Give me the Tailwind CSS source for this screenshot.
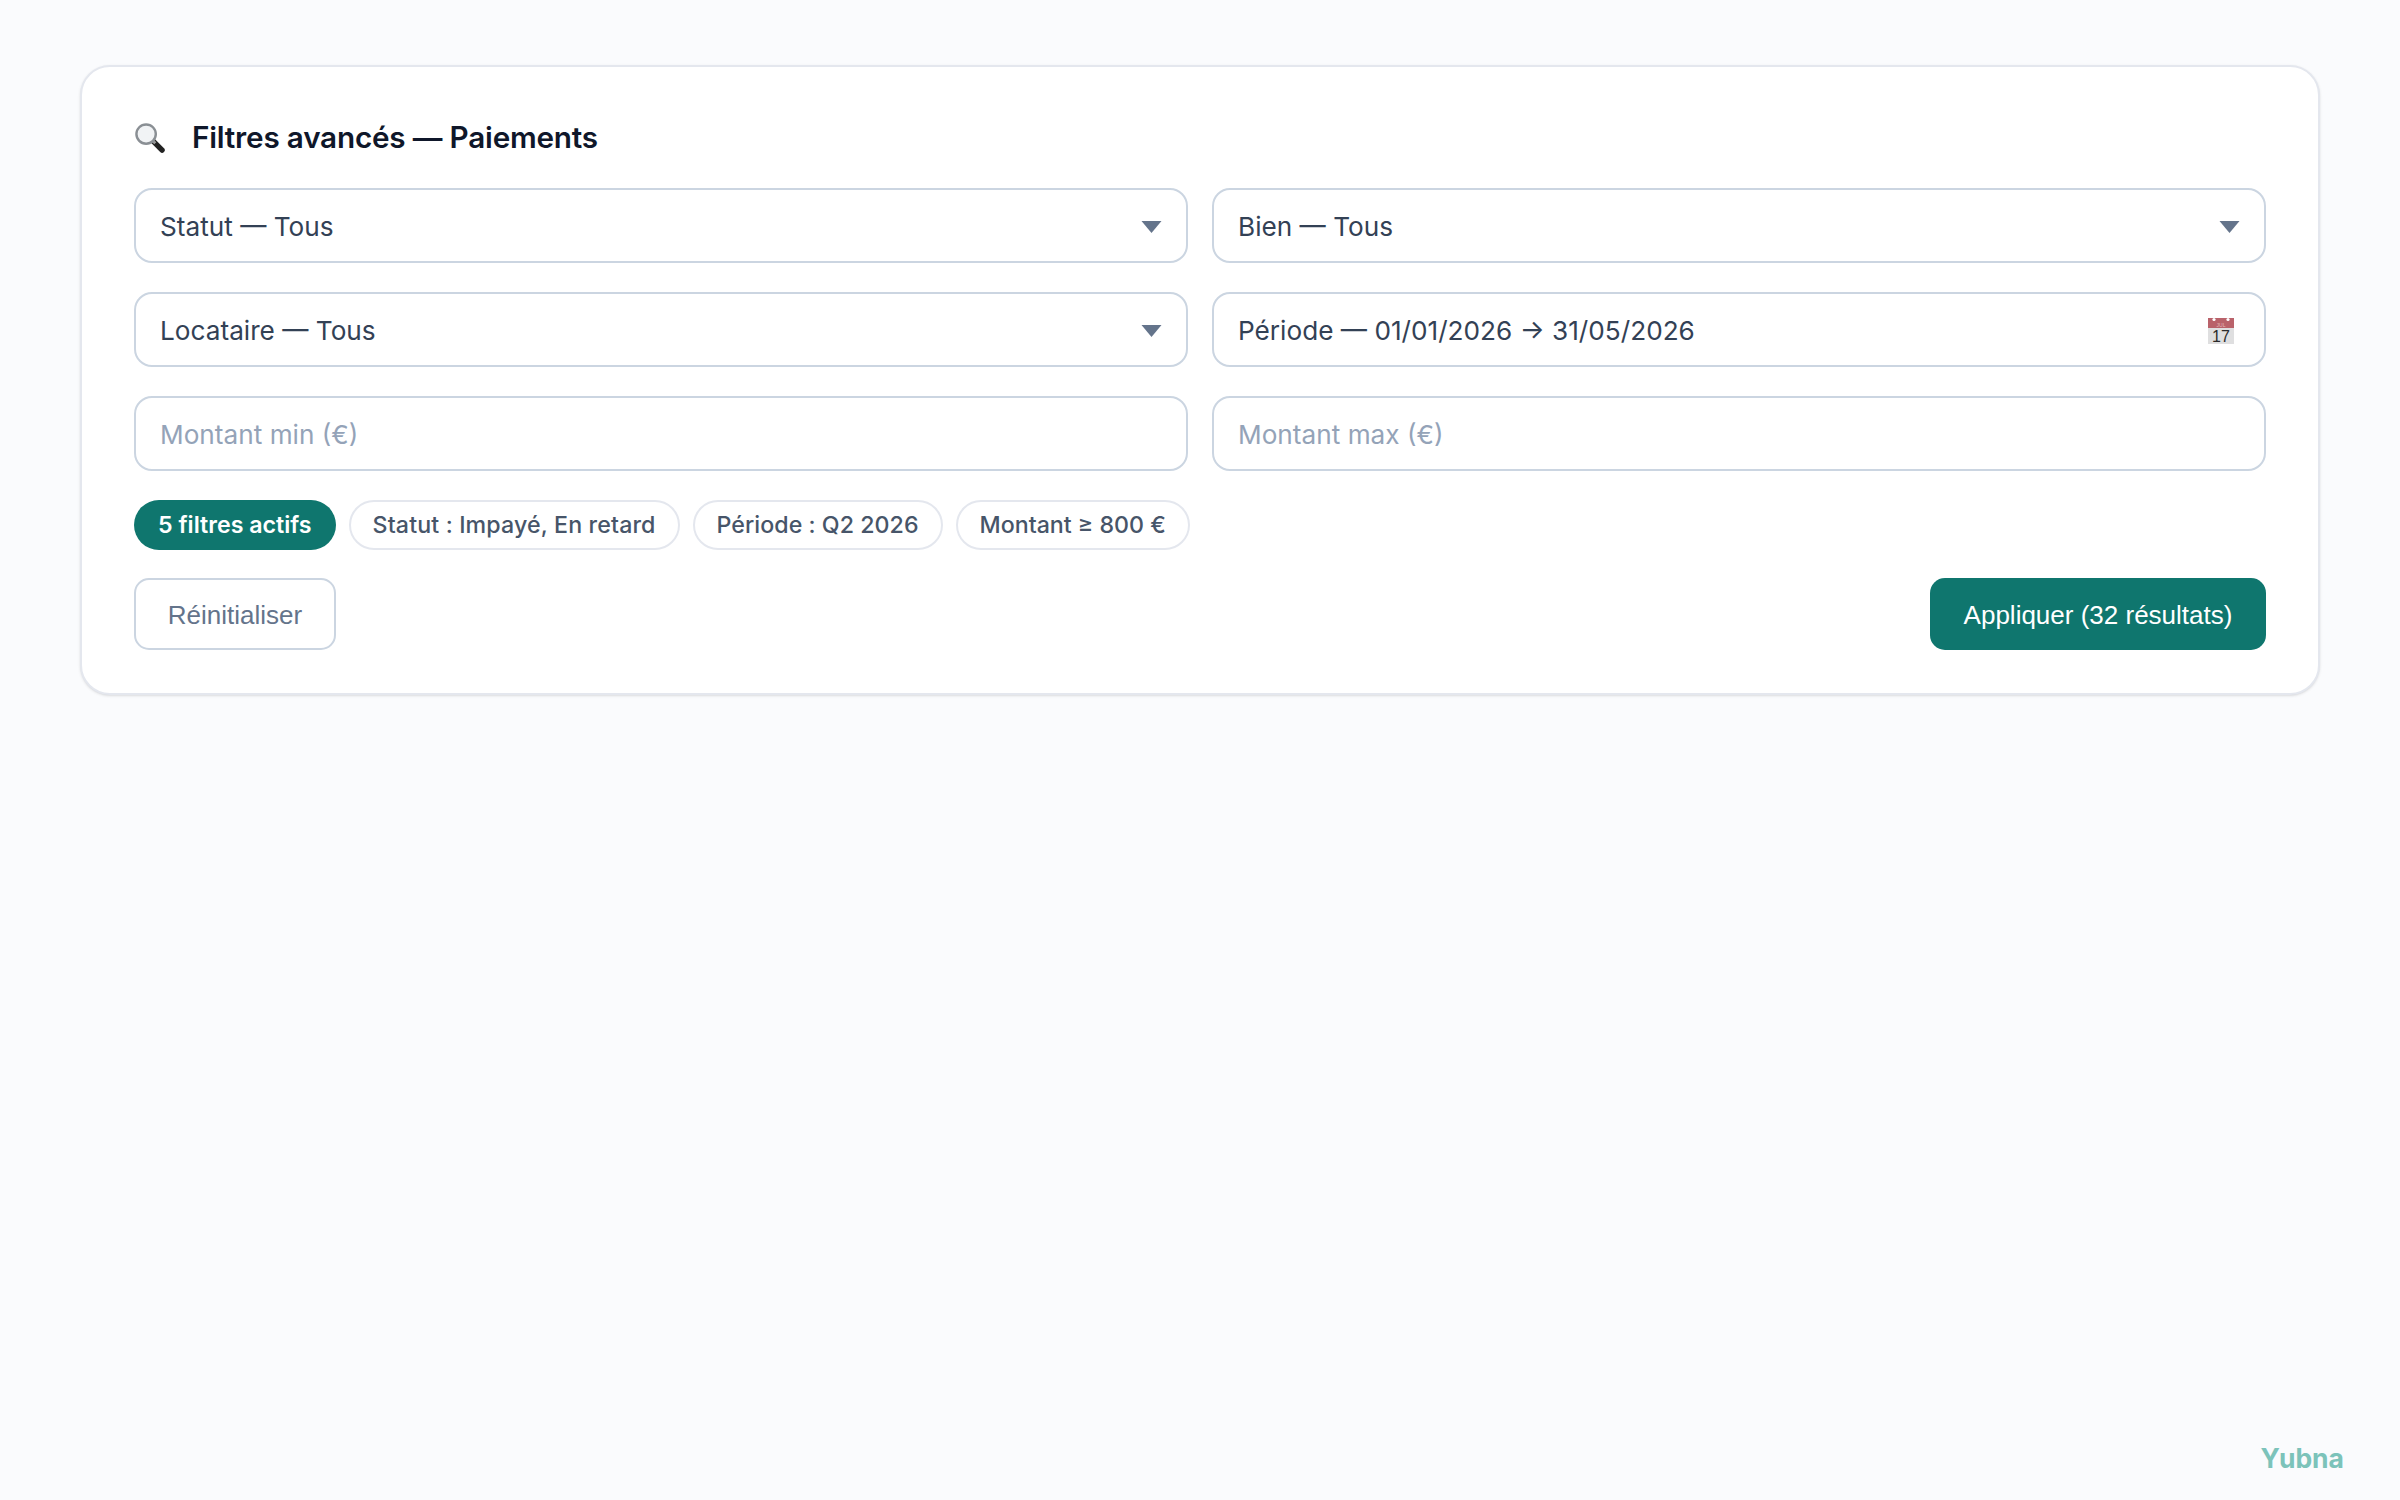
<!DOCTYPE html>
<html lang="fr">
<head>
  <meta charset="UTF-8">
  <title>Filtres avancés — Paiements</title>
  <script src="https://cdn.jsdelivr.net/npm/@tailwindcss/browser@4"></script>
</head>
<body class="relative h-[1500px] overflow-hidden bg-[#fafbfd] font-['Inter',sans-serif]">
  <main class="pt-[65px] px-[80px]">
    <section class="h-[630px] rounded-[30px] border-2 border-[#e4e7ee] bg-white px-[52px] pt-[48px] shadow-sm">

      <!-- title -->
      <header class="flex h-[44px] items-center gap-[27px]">
        <svg class="h-[31px] w-[31px]" viewBox="0 0 32 32">
          <line x1="20" y1="20" x2="29" y2="29" stroke="#222" stroke-width="5.5" stroke-linecap="round"/>
          <line x1="19" y1="19" x2="22" y2="22" stroke="#999" stroke-width="3"/>
          <circle cx="12.5" cy="12.5" r="10" fill="#f1f3f5" stroke="#8a8f94" stroke-width="2.5"/>
        </svg>
        <h1 class="text-[29.7px] font-semibold tracking-[-0.2px] text-[#0f172a]">Filtres avancés — Paiements</h1>
      </header>

      <!-- fields -->
      <div class="mt-[29px] grid grid-cols-2 gap-x-[24px] gap-y-[29px] text-[26.2px] text-[#334155]">
        <div class="flex h-[75px] items-center justify-between rounded-[18px] border-2 border-[#cbd5e1] px-[24px] pt-[2px]">
          <span>Statut — Tous</span>
          <svg class="h-[12px] w-[21px]" viewBox="0 0 20 12"><path d="M0 0h20L10 12z" fill="#64748b"/></svg>
        </div>
        <div class="flex h-[75px] items-center justify-between rounded-[18px] border-2 border-[#cbd5e1] px-[24px] pt-[2px]">
          <span>Bien — Tous</span>
          <svg class="h-[12px] w-[21px]" viewBox="0 0 20 12"><path d="M0 0h20L10 12z" fill="#64748b"/></svg>
        </div>
        <div class="flex h-[75px] items-center justify-between rounded-[18px] border-2 border-[#cbd5e1] px-[24px] pt-[2px]">
          <span>Locataire — Tous</span>
          <svg class="h-[12px] w-[21px]" viewBox="0 0 20 12"><path d="M0 0h20L10 12z" fill="#64748b"/></svg>
        </div>
        <div class="flex h-[75px] items-center justify-between rounded-[18px] border-2 border-[#cbd5e1] pl-[24px] pr-[29px] pt-[2px]">
          <span>Période — 01/01/2026 → 31/05/2026</span>
          <svg class="h-[28px] w-[28px]" viewBox="0 0 28 28">
            <rect x="1" y="1" width="26" height="26" fill="#dfdfe0"/>
            <rect x="1" y="1" width="26" height="10" fill="#b9626a"/>
            <circle cx="7" cy="2.5" r="1.6" fill="#fff"/>
            <circle cx="21" cy="2.5" r="1.6" fill="#fff"/>
            <text x="14" y="9.5" text-anchor="middle" font-family="Liberation Sans, sans-serif" font-size="5" fill="#e6b9bc">JUL</text>
            <text x="14" y="25" text-anchor="middle" font-family="Liberation Sans, sans-serif" font-size="16" fill="#2b2b2b">17</text>
          </svg>
        </div>
        <div class="flex h-[75px] items-center rounded-[18px] border-2 border-[#cbd5e1] pl-[24px] pt-[2px] text-[#94a3b8]">Montant min (€)</div>
        <div class="flex h-[75px] items-center rounded-[18px] border-2 border-[#cbd5e1] pl-[24px] pt-[2px] text-[#94a3b8]">Montant max (€)</div>
      </div>

      <!-- active filters -->
      <div class="mt-[29px] flex gap-[13px] text-[23.2px] font-medium text-[#475569]">
        <span class="flex h-[50px] items-center rounded-full bg-[#0f766e] px-[24px] pt-[1px] font-semibold text-white">5 filtres actifs</span>
        <span class="flex h-[50px] items-center rounded-full border-2 border-[#e4e7ee] px-[22px] pt-[1px] tracking-[0.14px]">Statut : Impayé, En retard</span>
        <span class="flex h-[50px] items-center rounded-full border-2 border-[#e4e7ee] px-[22px] pt-[1px] tracking-[0.04px]">Période : Q2 2026</span>
        <span class="flex h-[50px] items-center rounded-full border-2 border-[#e4e7ee] px-[22px] pt-[1px]">Montant ≥ 800 €</span>
      </div>

      <!-- actions -->
      <div class="mt-[28px] flex items-center justify-between font-['Liberation_Sans',sans-serif] text-[26px]">
        <button class="h-[72px] w-[202px] rounded-[15px] border-2 border-[#cbd5e1] pt-[2px] text-[#64748b]">Réinitialiser</button>
        <button class="h-[72px] w-[336px] rounded-[15px] bg-[#0f766e] pt-[2px] text-white">Appliquer (32 résultats)</button>
      </div>
    </section>
  </main>

  <span class="absolute bottom-[21px] right-[56px] text-[26.5px] font-bold text-[#7cc3ba]">Yubna</span>
</body>
</html>
